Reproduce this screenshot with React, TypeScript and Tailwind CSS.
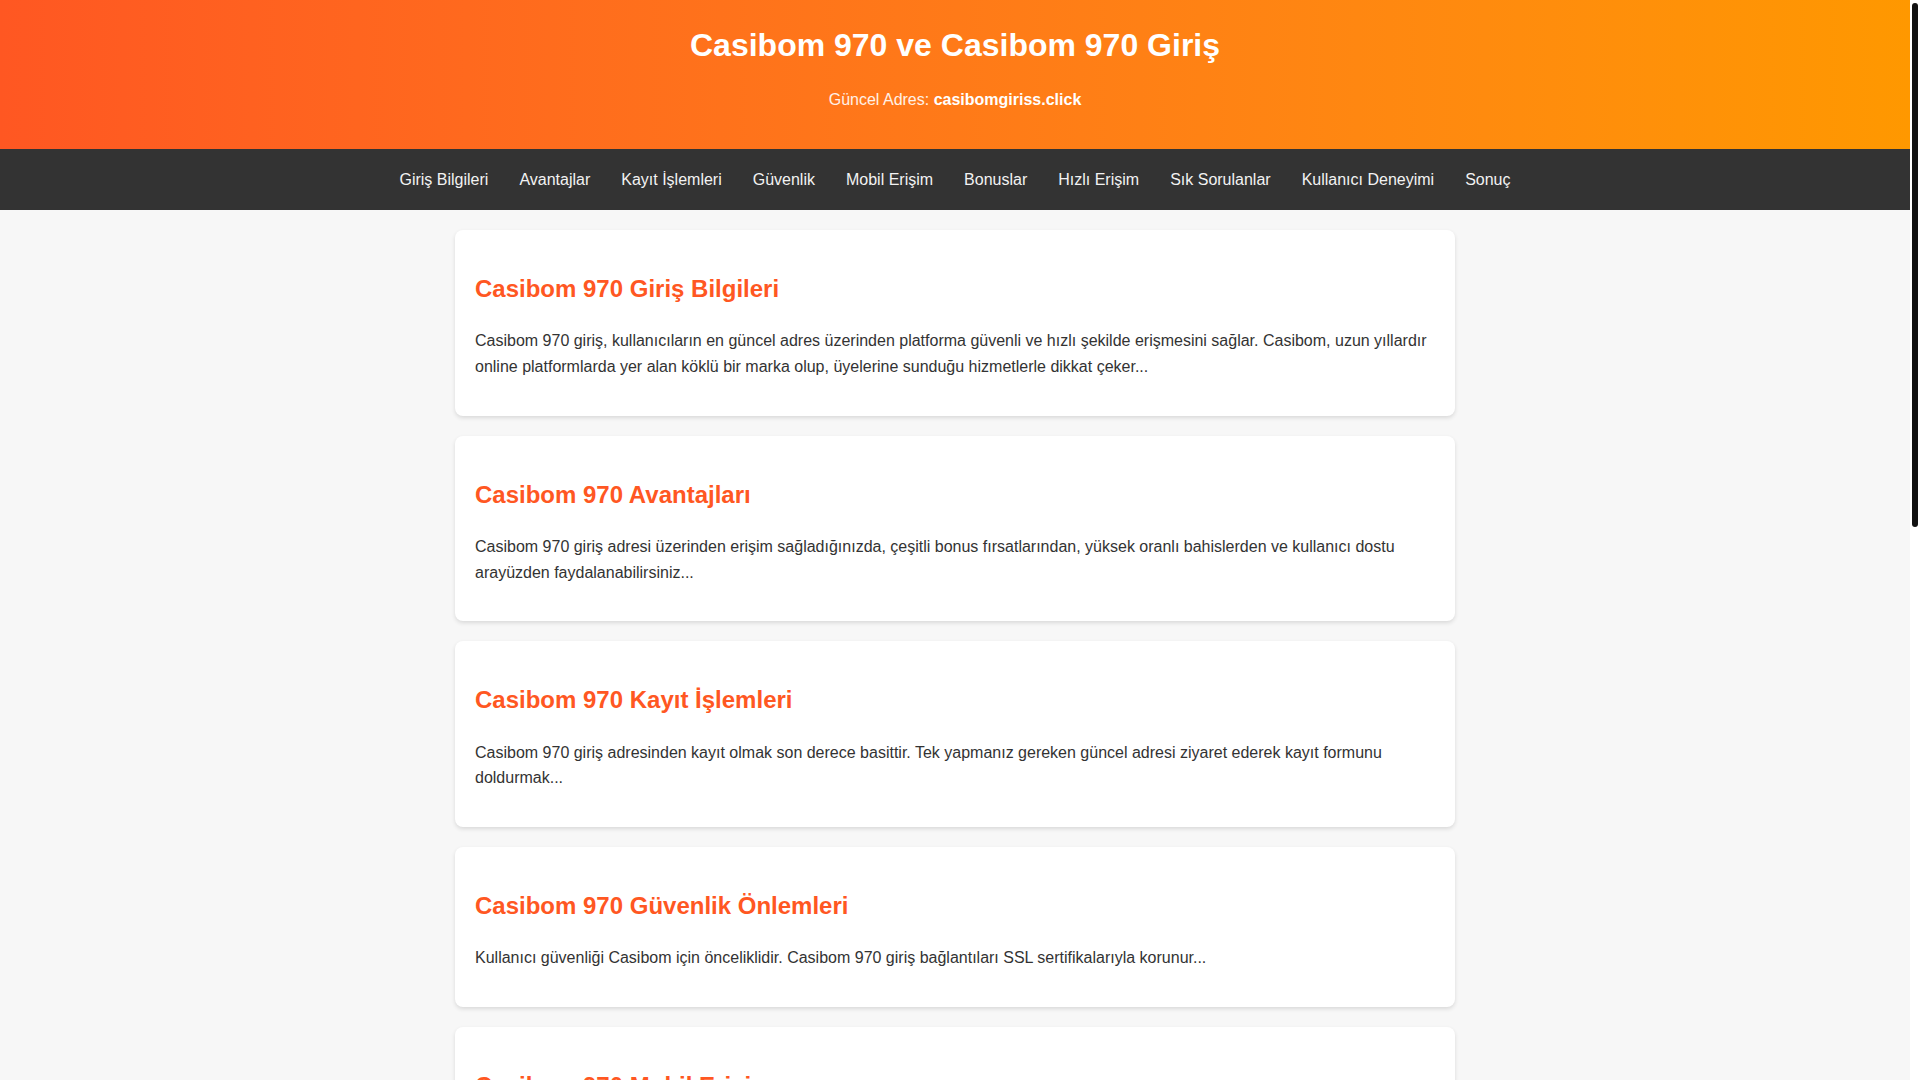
import React from 'react';

const navItems = [
  'Giriş Bilgileri',
  'Avantajlar',
  'Kayıt İşlemleri',
  'Güvenlik',
  'Mobil Erişim',
  'Bonuslar',
  'Hızlı Erişim',
  'Sık Sorulanlar',
  'Kullanıcı Deneyimi',
  'Sonuç',
];

const sections = [
  {
    title: 'Casibom 970 Giriş Bilgileri',
    text: 'Casibom 970 giriş, kullanıcıların en güncel adres üzerinden platforma güvenli ve hızlı şekilde erişmesini sağlar. Casibom, uzun yıllardır online platformlarda yer alan köklü bir marka olup, üyelerine sunduğu hizmetlerle dikkat çeker...',
  },
  {
    title: 'Casibom 970 Avantajları',
    text: 'Casibom 970 giriş adresi üzerinden erişim sağladığınızda, çeşitli bonus fırsatlarından, yüksek oranlı bahislerden ve kullanıcı dostu arayüzden faydalanabilirsiniz...',
  },
  {
    title: 'Casibom 970 Kayıt İşlemleri',
    text: 'Casibom 970 giriş adresinden kayıt olmak son derece basittir. Tek yapmanız gereken güncel adresi ziyaret ederek kayıt formunu doldurmak...',
  },
  {
    title: 'Casibom 970 Güvenlik Önlemleri',
    text: 'Kullanıcı güvenliği Casibom için önceliklidir. Casibom 970 giriş bağlantıları SSL sertifikalarıyla korunur...',
  },
  {
    title: 'Casibom 970 Mobil Erişim',
    text: 'Casibom 970 giriş adresine mobil cihazlardan da kolayca ulaşabilir, dilediğiniz her yerden platformun sunduğu tüm hizmetlere kesintisiz şekilde erişebilirsiniz...',
  },
  {
    title: 'Casibom 970 Bonusları',
    text: 'Yeni üyelere özel hoş geldin bonusu ve düzenli kampanyalar Casibom 970 kullanıcılarını bekliyor...',
  },
  {
    title: 'Casibom 970 Hızlı Erişim',
    text: 'Güncel giriş adresini kaydederek Casibom 970 platformuna her zaman hızlı ve sorunsuz bir şekilde bağlanabilir, erişim engellerinden etkilenmeden oyunlarınıza devam edebilirsiniz...',
  },
  {
    title: 'Casibom 970 Sık Sorulanlar',
    text: 'Casibom 970 giriş adresi neden değişir? Erişim engelleri nedeniyle adresler güncellenir ve yeni bağlantı paylaşılır...',
  },
  {
    title: 'Casibom 970 Kullanıcı Deneyimi',
    text: 'Sade ve anlaşılır arayüzü sayesinde Casibom 970, yeni başlayanlardan deneyimli kullanıcılara kadar herkese keyifli bir deneyim sunar...',
  },
  {
    title: 'Sonuç',
    text: 'Casibom 970 giriş adresi ile güvenli, hızlı ve avantajlı bir platform deneyimine hemen ulaşabilirsiniz...',
  },
];

function Card({ title, text }: { title: string; text: string }) {
  return (
    <section className="rounded-lg bg-white px-5 py-5 shadow-[0_2px_4px_rgba(0,0,0,0.12)]">
      <h2 className="mt-[20px] mb-[20px] text-[24px] font-bold leading-[38.4px] text-[#ff5722]">{title}</h2>
      <p className="mb-4 text-[16px] leading-[25.6px] text-[#333]">{text}</p>
    </section>
  );
}

export default function App() {
  return (
    <div className="flex h-screen overflow-hidden bg-white font-['Liberation_Sans',Arial,sans-serif]">
      <div className="min-w-0 flex-1 bg-[#f7f7f7]">
        <header className="bg-gradient-to-r from-[#ff5722] to-[#ff9800] pt-[27px] pb-[40px] text-center text-white">
          <h1 className="text-[32px] font-bold leading-[37px]">Casibom 970 ve Casibom 970 Giriş</h1>
          <p className="mt-[27px] text-[16px] leading-[18px] text-white/90">
            Güncel Adres: <strong className="font-bold text-white">casibomgiriss.click</strong>
          </p>
        </header>

        <nav className="flex h-[61px] items-center justify-center bg-[#333]">
          {navItems.map((item) => (
            <a key={item} href="#" className="px-[15.5px] text-[16px] leading-[18px] text-[#f2f2f2]">
              {item}
            </a>
          ))}
        </nav>

        <main className="mx-auto flex max-w-[1000px] flex-col gap-5 py-5">
          {sections.map((s) => (
            <Card key={s.title} title={s.title} text={s.text} />
          ))}
        </main>
      </div>

      {/* page scrollbar */}
      <div className="w-[10px] shrink-0 bg-white px-[2px] pt-[3px]">
        <div className="h-[524px] rounded-full bg-[#111]" />
      </div>
    </div>
  );
}
